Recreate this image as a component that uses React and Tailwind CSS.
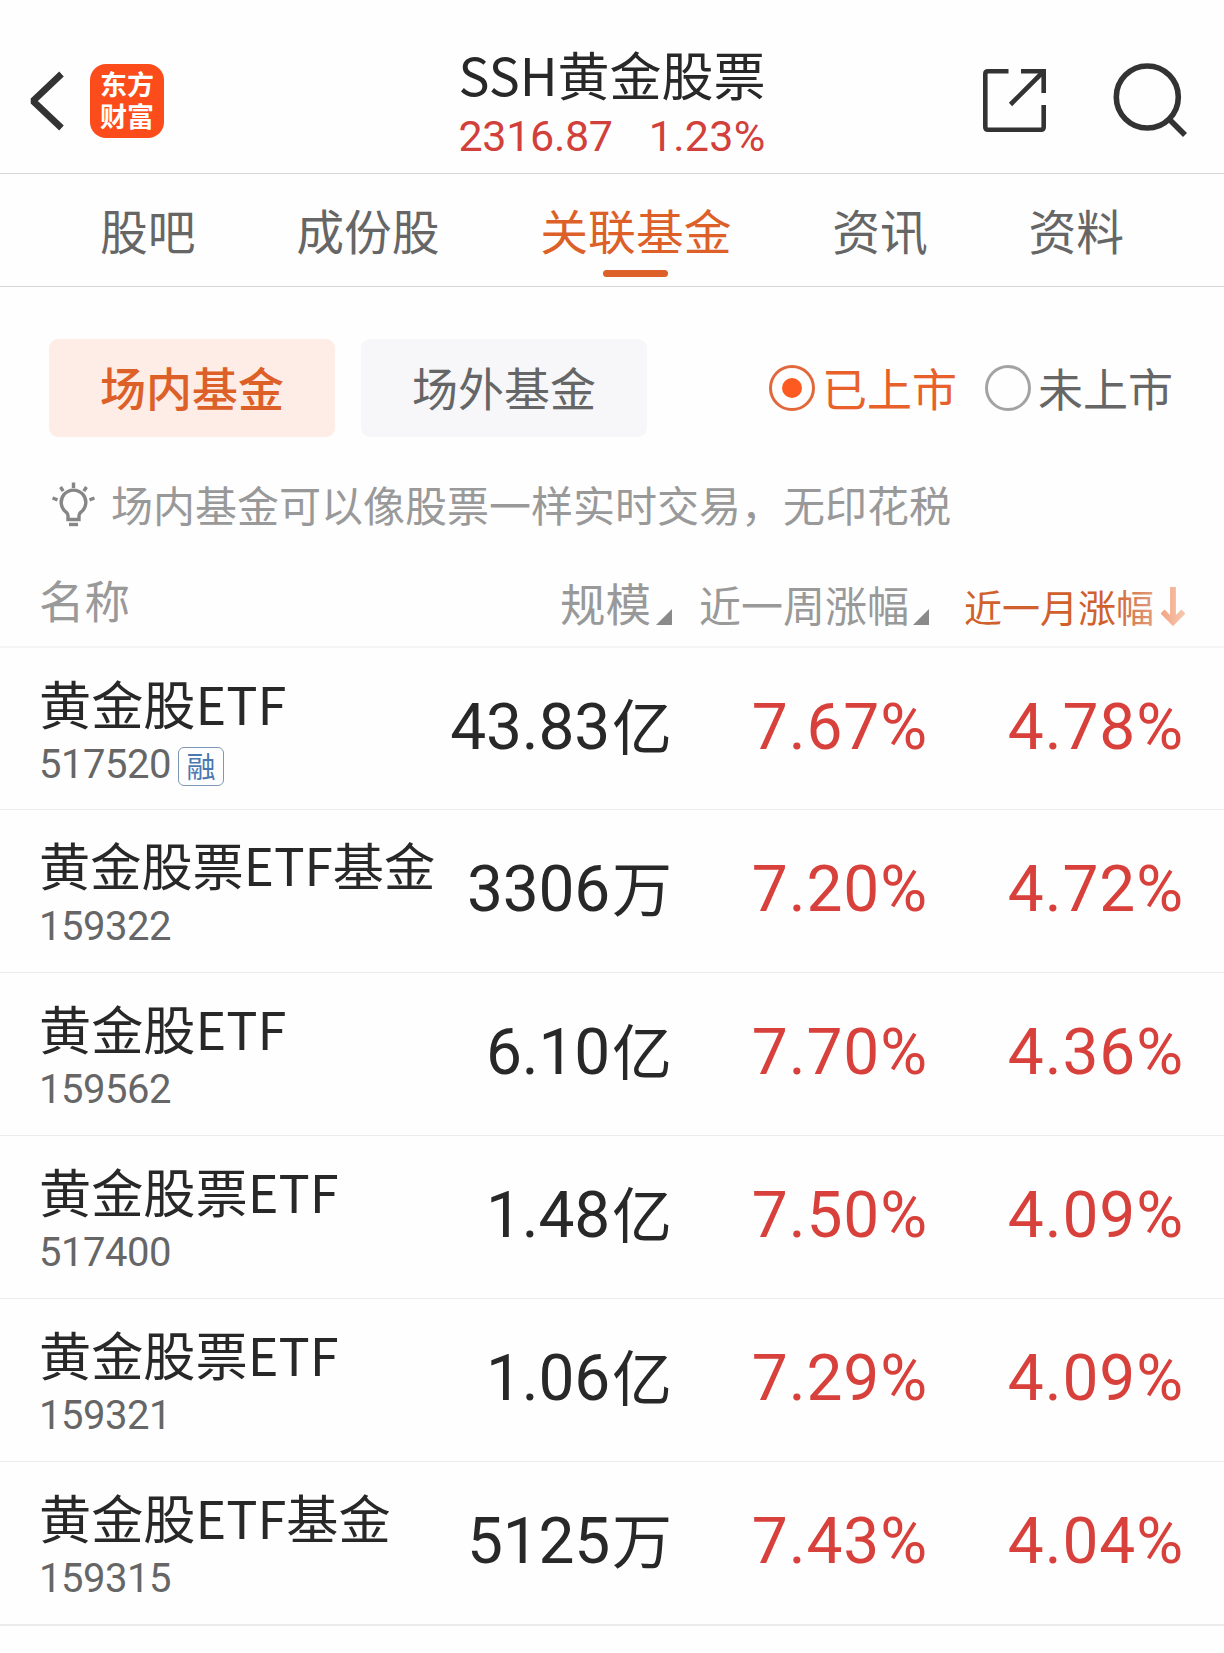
import { useState } from 'react'

const tabs = ['股吧', '成份股', '关联基金', '资讯', '资料']

const funds = [
  { name: '黄金股ETF', code: '517520', margin: true, scale: '43.83', unit: '亿', week: '7.67%', month: '4.78%' },
  { name: '黄金股票ETF基金', code: '159322', scale: '3306', unit: '万', week: '7.20%', month: '4.72%' },
  { name: '黄金股ETF', code: '159562', scale: '6.10', unit: '亿', week: '7.70%', month: '4.36%' },
  { name: '黄金股票ETF', code: '517400', scale: '1.48', unit: '亿', week: '7.50%', month: '4.09%' },
  { name: '黄金股票ETF', code: '159321', scale: '1.06', unit: '亿', week: '7.29%', month: '4.09%' },
  { name: '黄金股ETF基金', code: '159315', scale: '5125', unit: '万', week: '7.43%', month: '4.04%' },
]

function Header() {
  return (
    <header className="grid h-[174px] grid-cols-[1fr_auto_1fr] border-b border-[#d6d6d6] pt-[40px]">
      <div className="flex items-start pl-[26px] pt-[24px]">
        <svg className="mt-[6px] h-[62px] w-[39px]" viewBox="0 0 39 62" fill="none" stroke="#333" strokeWidth="6.6">
          <path d="M35.5 4 L7 31 L35.5 58" strokeLinejoin="bevel" />
        </svg>
        <div className="ml-[25px] flex h-[74px] w-[74px] items-center justify-center rounded-[16px] bg-[#fc4c1b]">
          <p className="-mt-[3px] w-[54px] break-all text-[27px] font-bold leading-[32px] text-white">东方财富</p>
        </div>
      </div>

      <div className="flex flex-col items-center">
        <h1 className="pt-[3px] text-[52px] leading-[61px] text-[#282828]">SSH黄金股票</h1>
        <p className="flex gap-[36px] font-[Roboto] text-[43px] leading-[64px] text-[#d2403b]">
          <span className="tracking-[-0.3px]">2316.87</span>
          <span className="tracking-[0.3px]">1.23%</span>
        </p>
      </div>

      <div className="flex items-start justify-end gap-[66px] pr-[35px] pt-[22px]">
        <svg className="mt-[7px] h-[63px] w-[63px]" viewBox="0 0 63 63" fill="none" stroke="#333" strokeWidth="4.6">
          <path d="M25.5 2.3 H5 Q2.3 2.3 2.3 5 V58 Q2.3 60.7 5 60.7 H58 Q60.7 60.7 60.7 58 V36" />
          <path d="M38 2.3 H60.7 V24" />
          <path d="M60 3 L27.5 35.5" />
        </svg>
        <svg className="h-[76px] w-[77px]" viewBox="0 0 77 76" fill="none" stroke="#333" strokeWidth="5.6">
          <circle cx="35.3" cy="35" r="31" />
          <path d="M57 57 L73 73" />
        </svg>
      </div>
    </header>
  )
}

function TabBar({ active, onChange }) {
  return (
    <nav className="flex h-[113px] justify-between border-b border-[#d6d6d6] px-[100px]">
      {tabs.map((tab) => (
        <button
          key={tab}
          type="button"
          onClick={() => onChange(tab)}
          className={`flex flex-col items-center pt-[24px] text-[47.8px] leading-[64px] ${
            tab === active ? 'text-[#dc6028]' : 'text-[#666]'
          }`}
        >
          {tab}
          {tab === active && <span className="mt-[8px] h-[7px] w-[65px] rounded-full bg-[#dc6028]" />}
        </button>
      ))}
    </nav>
  )
}

function Radio({ label, checked, onClick }) {
  return (
    <button
      type="button"
      onClick={onClick}
      className={`flex items-center text-[45px] leading-[60px] ${checked ? 'text-[#e8602a]' : 'text-[#666]'}`}
    >
      <span
        className={`mr-[7px] flex h-[46px] w-[46px] items-center justify-center rounded-full border-[3px] ${
          checked ? 'border-[#e0683a]' : 'border-[#a3a3a3]'
        }`}
      >
        {checked && <span className="h-[20px] w-[20px] rounded-full bg-[#fd5a22]" />}
      </span>
      <span className="-mt-[1px]">{label}</span>
    </button>
  )
}

function SortMark() {
  return (
    <svg className="h-[16px] w-[16px]" viewBox="0 0 16 16" fill="#8a8a8a">
      <path d="M16 0 V16 H0 Z" />
    </svg>
  )
}

function FundRow({ fund }) {
  // long names shrink a little so they stay clear of the scale column
  const nameSize = fund.name.length > 8 ? 'text-[51.2px]' : 'text-[52.2px]'

  return (
    <li className="grid h-[163px] grid-cols-[401px_232px_256px_256px] border-b border-[#ececec] pl-[39px] first:h-[162px] last:h-[164px] last:border-b-2">
      <div className="pt-[23px]">
        <h2 className={`whitespace-nowrap leading-[62px] text-[#282828] ${nameSize}`}>{fund.name}</h2>
        <div className="flex items-center pt-[1px]">
          <span className="font-[Roboto] text-[40px] leading-[62px] tracking-[-0.5px] text-[#666]">{fund.code}</span>
          {fund.margin && (
            <span className="ml-[7px] mt-[2px] flex h-[39px] w-[46px] items-center justify-center rounded-[6px] border border-[#7d97b8] pb-[2px] text-[29px] leading-[34px] text-[#4a78b0]">
              融
            </span>
          )}
        </div>
      </div>
      <p className="flex justify-end whitespace-nowrap text-[#282828]">
        <span className="pt-[40px] font-[Roboto] text-[64px] leading-[80px] tracking-[-0.2px]">{fund.scale}</span>
        <span className="ml-[2px] pt-[36px] text-[60px] leading-[80px]">{fund.unit}</span>
      </p>
      <p className="pt-[40px] text-right font-[Roboto] text-[64px] leading-[80px] tracking-[0.9px] text-[#d8403b]">
        {fund.week}
      </p>
      <p className="pt-[40px] text-right font-[Roboto] text-[64px] leading-[80px] tracking-[0.9px] text-[#d8403b]">
        {fund.month}
      </p>
    </li>
  )
}

export default function App() {
  const [tab, setTab] = useState('关联基金')
  const [market, setMarket] = useState('场内基金')
  const [listed, setListed] = useState('已上市')

  return (
    <div className="min-h-[1653px] w-[1224px] overflow-hidden bg-[#fefefe] font-['Noto_Sans_CJK_SC',sans-serif]">
      <Header />
      <TabBar active={tab} onChange={setTab} />

      <section className="flex items-center justify-between pl-[49px] pr-[51px] pt-[52px]">
        <div className="flex gap-[26px]">
          {['场内基金', '场外基金'].map((item) => (
            <button
              key={item}
              type="button"
              onClick={() => setMarket(item)}
              className={`h-[98px] w-[286px] rounded-[9px] pb-[4px] text-[46px] leading-[60px] ${
                item === market ? 'bg-[#fdede6] font-medium text-[#dc6028]' : 'bg-[#f7f7f9] text-[#666]'
              }`}
            >
              {item}
            </button>
          ))}
        </div>
        <div className="flex gap-[28px]">
          {['已上市', '未上市'].map((item) => (
            <Radio key={item} label={item} checked={item === listed} onClick={() => setListed(item)} />
          ))}
        </div>
      </section>

      <p className="mt-[37px] flex h-[60px] items-center pl-[51px] text-[42px] leading-[60px] text-[#999]">
        <svg className="mr-[15px] h-[46px] w-[45px]" viewBox="0 0 45 46" fill="none" stroke="#868686" strokeWidth="3.4">
          <path d="M17 38.5 V34.5 Q17 33 15.5 31.5 A12.3 12.3 0 1 1 29.5 31.5 Q28 33 28 34.5 V38.5 Z" />
          <path d="M18 43.5 H27" />
          <path d="M22.5 1.5 V7 M9.5 6 L12.2 10.2 M35.5 6 L32.8 10.2 M1.5 17 L6.5 18.8 M43.5 17 L38.5 18.8" />
        </svg>
        场内基金可以像股票一样实时交易，无印花税
      </p>

      <div className="relative mt-[31px] grid h-[83px] grid-cols-[401px_232px_257px_256px] border-b-2 border-[#f4f4f4] pl-[39px] text-[#999]">
        <span className="pt-[4px] text-[45.5px] leading-[60px]">名称</span>
        <span className="flex justify-end gap-[5px] pt-[7px] text-[45.5px] leading-[60px]">
          规模
          <span className="pt-[37px] leading-none">
            <SortMark />
          </span>
        </span>
        <span className="flex justify-end gap-[4px] pt-[9px] text-[42px] leading-[60px]">
          近一周涨幅
          <span className="pt-[35px] leading-none">
            <SortMark />
          </span>
        </span>
        <span className="flex justify-end gap-[7px] pt-[11px] text-[38px] leading-[60px] text-[#d0602c]">
          近一月涨幅
          <svg className="mt-[11px] h-[39px] w-[24px]" viewBox="0 0 24 39" fill="none" stroke="#ea5c1c" strokeWidth="5.8">
            <path d="M12 0 V34 M1.5 24.5 L12 35 L22.5 24.5" />
          </svg>
        </span>
        <div className="absolute right-0 top-0 h-full w-[114px] bg-gradient-to-r from-transparent to-[#fefefe]" />
      </div>

      <ul>
        {funds.map((fund) => (
          <FundRow key={fund.code} fund={fund} />
        ))}
      </ul>
    </div>
  )
}
